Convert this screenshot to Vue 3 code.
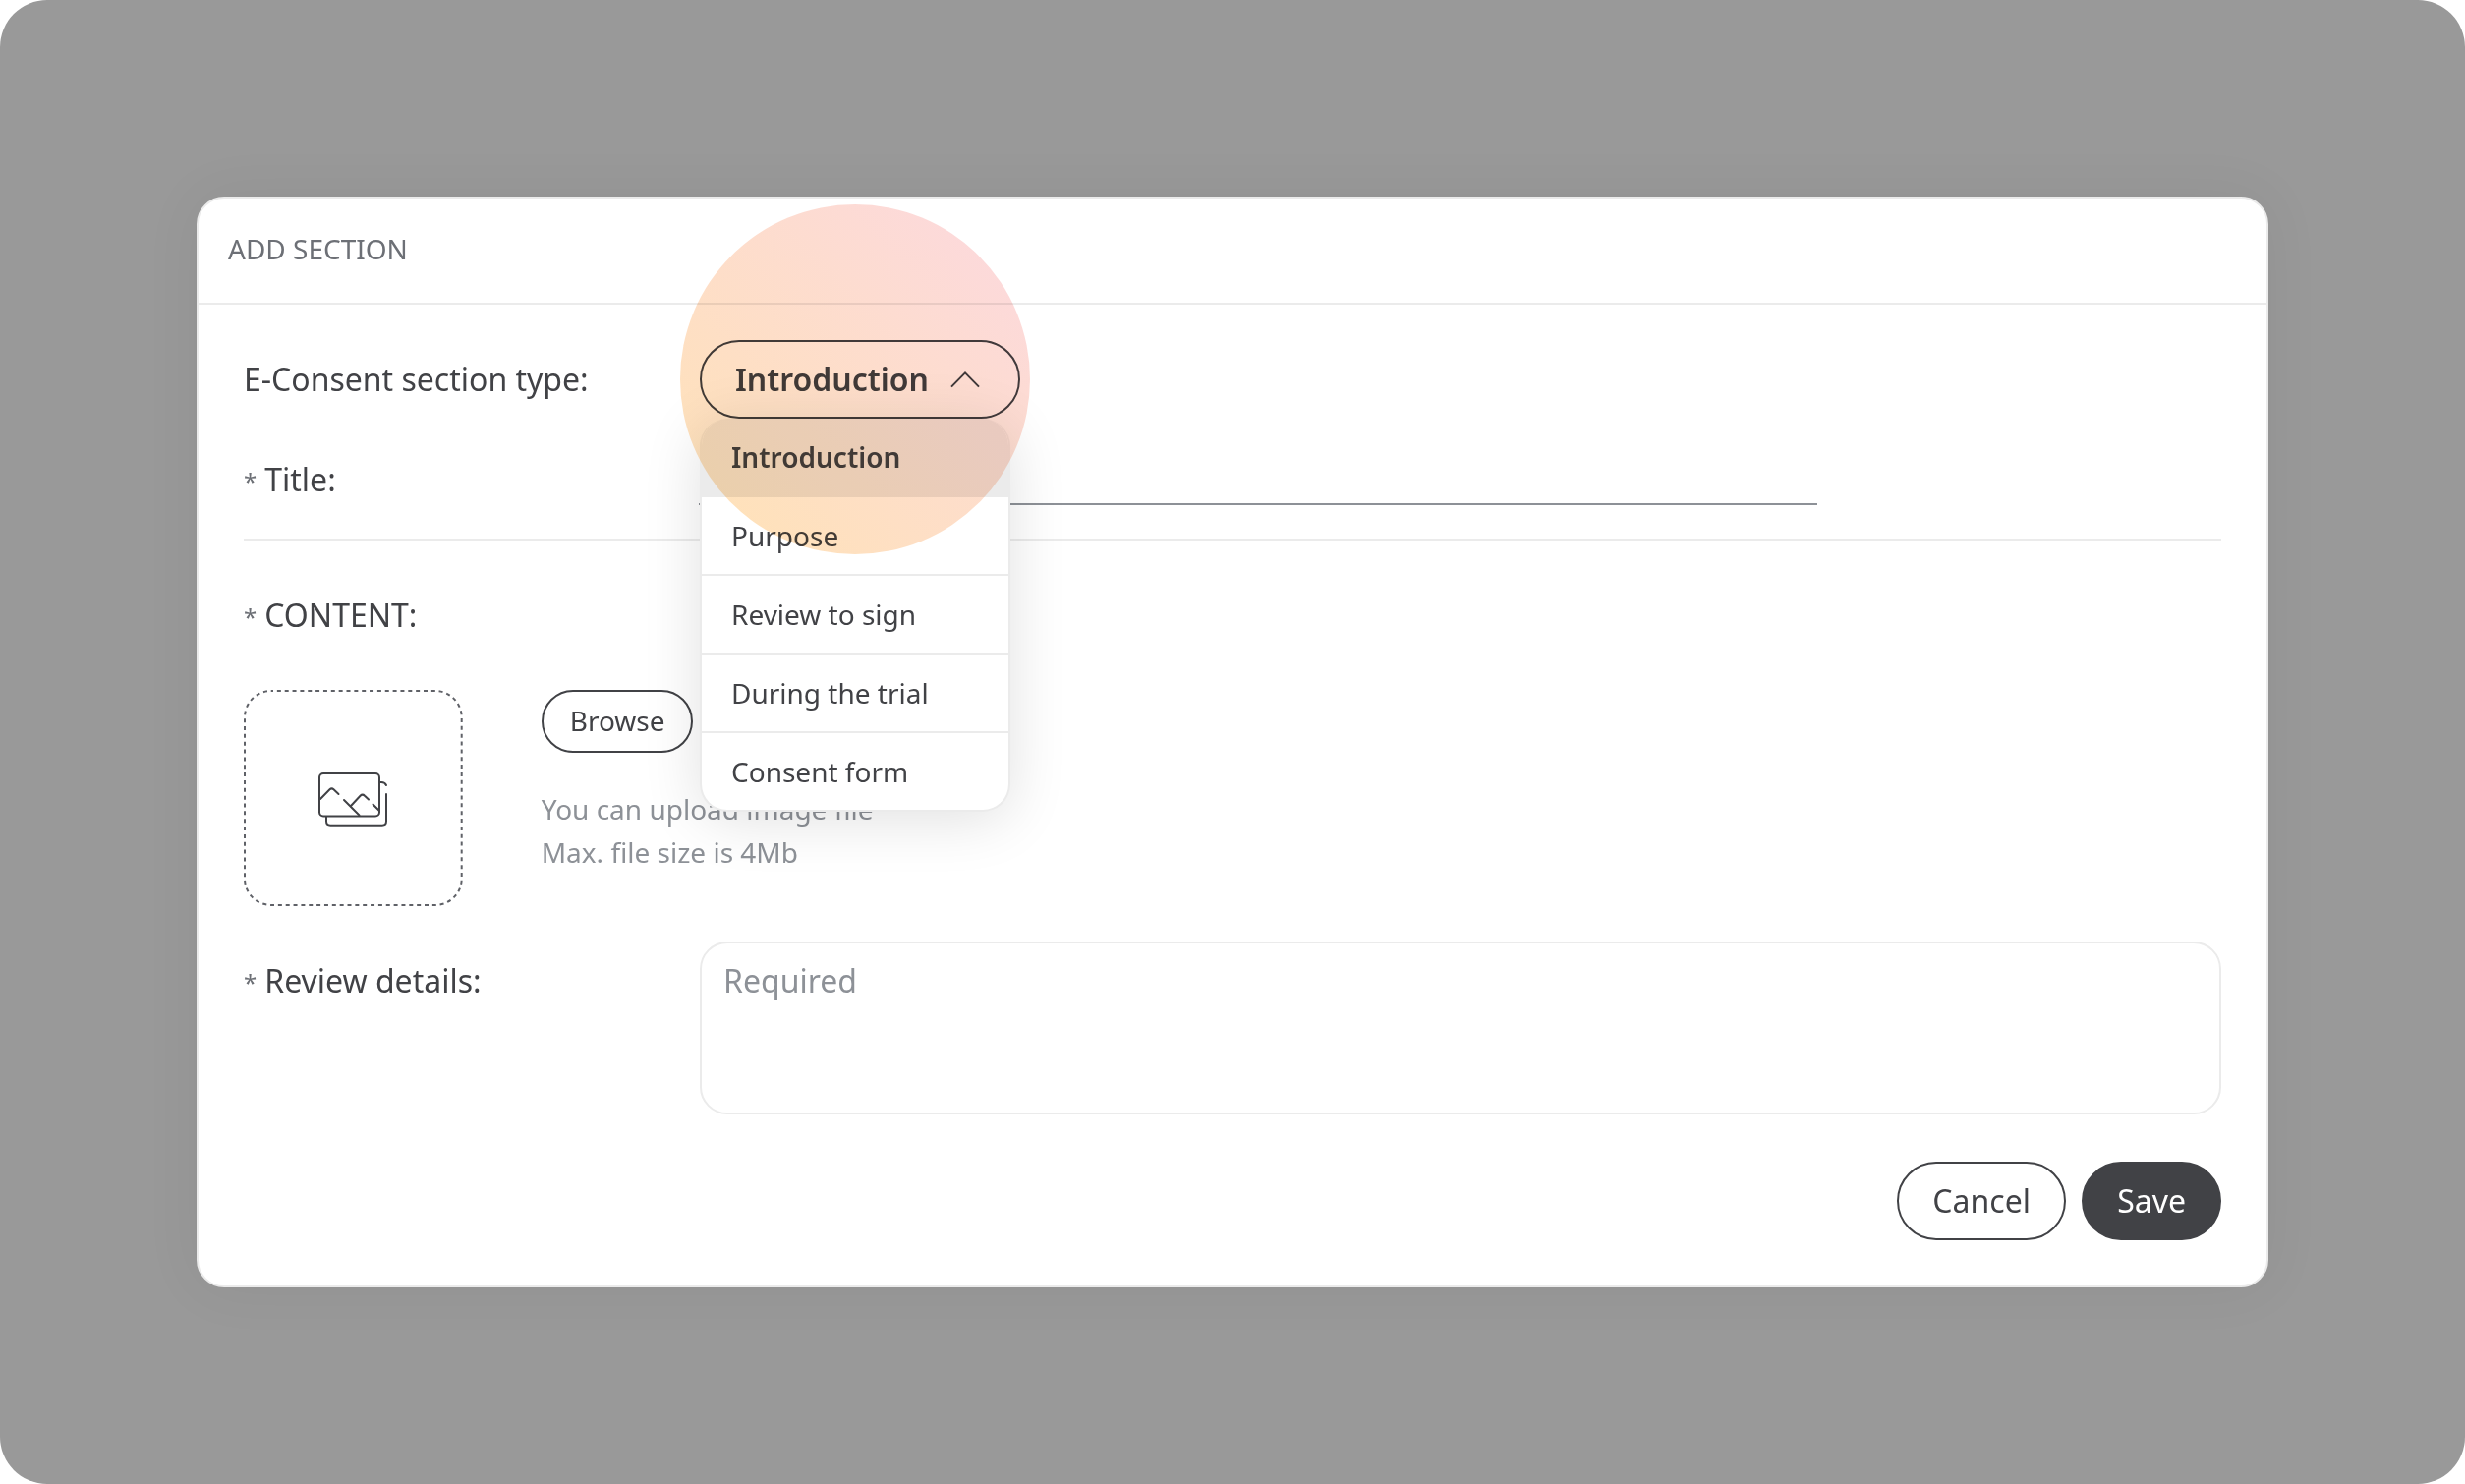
<script setup>
import { ref } from 'vue'

const options = ['Introduction', 'Purpose', 'Review to sign', 'During the trial', 'Consent form']
const selected = ref('Introduction')
</script>

<template>
  <div class="backdrop">
    <section class="modal">
      <header class="modal-header">ADD SECTION</header>
      <div class="modal-body">
        <div class="row type-row">
          <div class="label">E-Consent section type:</div>
          <div class="select-wrap">
            <button class="select">
              <span>{{ selected }}</span>
              <svg class="chevron" width="32" height="32" viewBox="0 0 32 32" fill="none">
                <path d="M2 23.6 16 9.4 30 23.6" stroke="#414246" stroke-width="2" />
              </svg>
            </button>
            <ul class="menu">
              <li
                v-for="option in options"
                :key="option"
                class="option"
                :class="{ active: option === selected }"
              >{{ option }}</li>
            </ul>
            <div class="spotlight"></div>
          </div>
        </div>

        <div class="row title-row">
          <div class="label"><span class="star">*</span>Title:</div>
          <div class="title-input"></div>
        </div>

        <div class="label content-label"><span class="star">*</span>CONTENT:</div>

        <div class="upload">
          <div class="preview">
            <svg class="dashes" width="223" height="220" viewBox="0 0 223 220" fill="none">
              <rect x="1" y="1" width="220.700" height="218" rx="27" stroke="#5f6167" stroke-width="2" stroke-dasharray="4 3.850" stroke-dashoffset="2" />
            </svg>
            <svg class="picture" width="72" height="56" viewBox="0 0 72 56" fill="none" stroke="#414246" stroke-width="2" stroke-linecap="round">
              <rect x="2" y="1" width="61" height="43.500" rx="4" />
              <path d="M3 27 12.500 17.300Q14.500 15.500 16.500 17.300L21.500 22" />
              <path d="M27 28 42.500 43.500M34 34 43.500 23.700Q45.800 21.500 48 23.700L52 27.500M56.500 32.500 62.500 38.500" />
              <path d="M64 10Q68.500 9.500 70 13M70 22V49.500Q70 53.700 65.800 53.700H13.200Q9 53.700 9 49.500V45" />
            </svg>
          </div>
          <div class="upload-info">
            <button class="browse">Browse</button>
            <p class="hint">You can upload image file<br />Max. file size is 4Mb</p>
          </div>
        </div>

        <div class="row details-row">
          <div class="label"><span class="star">*</span>Review details:</div>
          <div class="textarea">Required</div>
        </div>

        <footer class="actions">
          <button class="btn cancel">Cancel</button>
          <button class="btn primary">Save</button>
        </footer>
      </div>
    </section>
  </div>
</template>

<style>
body {
  background: #fff;
}
</style>

<style scoped>
.backdrop,
.backdrop * {
  box-sizing: border-box;
}
.backdrop {
  width: 2508px;
  height: 1510px;
  padding: 200px;
  border-radius: 48px;
  background: #999;
  font-family: "Noto Sans", sans-serif;
  font-size: 32px;
  line-height: 44px;
  color: #414246;
}
button {
  margin: 0;
  font: inherit;
  color: inherit;
}
.modal {
  height: 1110px;
  border: 2px solid #ebebeb;
  border-radius: 28px;
  background: #fff;
  box-shadow: 0 0 60px rgba(0, 0, 0, 0.06);
}
.modal-header {
  height: 108px;
  padding: 29px 30px 0;
  border-bottom: 2px solid #ebebeb;
  font-size: 28px;
  color: #6d7076;
}
.modal-body {
  padding: 36px 46px 0;
}
.row {
  display: flex;
}
.label {
  width: 464px;
  flex: none;
}
.star {
  display: inline-block;
  margin-right: 8px;
  font-size: 24px;
  line-height: 1;
  vertical-align: 1px;
  color: #6d7076;
}
.type-row {
  height: 80px;
}
.type-row .label {
  padding-top: 18px;
}
.select-wrap {
  position: relative;
  width: 326px;
}
.select {
  display: flex;
  align-items: center;
  gap: 21px;
  width: 326px;
  height: 80px;
  padding: 0 34px;
  border: 2px solid #414246;
  border-radius: 40px;
  background: none;
  font-weight: 600;
}
.chevron {
  flex: none;
}
.menu {
  position: absolute;
  z-index: 1;
  top: 80px;
  left: 0;
  width: 316px;
  height: 400px;
  margin: 0;
  padding: 0;
  overflow: hidden;
  list-style: none;
  border: 2px solid #ebebeb;
  border-top: 0;
  border-radius: 28px;
  background: #fff;
  font-size: 28px;
  box-shadow: 0 8px 60px rgba(0, 0, 0, 0.12);
}
.option {
  height: 80px;
  padding: 17px 30px;
  border-bottom: 2px solid #ebebeb;
}
.option:last-child {
  border-bottom: 0;
}
.option.active {
  background: #ebebeb;
  font-weight: 600;
}
.spotlight {
  position: absolute;
  z-index: 2;
  top: -138px;
  left: -20px;
  width: 356px;
  height: 356px;
  border-radius: 50%;
  background: linear-gradient(45deg, #ffe3b5, #fcd8e0);
  mix-blend-mode: multiply;
}
.title-row {
  height: 124px;
  padding-top: 40px;
  border-bottom: 2px solid #ebebeb;
}
.title-input {
  width: 1138px;
  height: 48px;
  margin-left: -1px;
  border-bottom: 2px solid #8d9197;
}
.content-label {
  margin-top: 54px;
}
.upload {
  display: flex;
  gap: 80px;
  margin-top: 54px;
}
.preview {
  position: relative;
  display: flex;
  width: 222.7px;
  height: 220px;
  padding: 84px 0 0 75px;
}
.dashes {
  position: absolute;
  inset: 0;
}
.browse {
  display: block;
  height: 64px;
  padding: 0 27px 2px;
  border: 2px solid #414246;
  border-radius: 32px;
  background: none;
  font-size: 28px;
}
.hint {
  margin: 35px 0 0;
  font-size: 28px;
  color: #8d9197;
}
.details-row {
  margin-top: 36px;
}
.details-row .label {
  padding-top: 18px;
}
.textarea {
  flex: 1;
  height: 176px;
  padding: 16px 22px;
  border: 2px solid #ebebeb;
  border-radius: 28px;
  color: #8d9197;
}
.actions {
  display: flex;
  justify-content: flex-end;
  gap: 16px;
  margin-top: 48px;
}
.btn {
  height: 80px;
  padding: 0 34px;
  border: 2px solid #414246;
  border-radius: 40px;
  background: #fff;
}
.btn.cancel {
  min-width: 172px;
}
.btn.primary {
  background: #414246;
  color: #fff;
}
</style>
